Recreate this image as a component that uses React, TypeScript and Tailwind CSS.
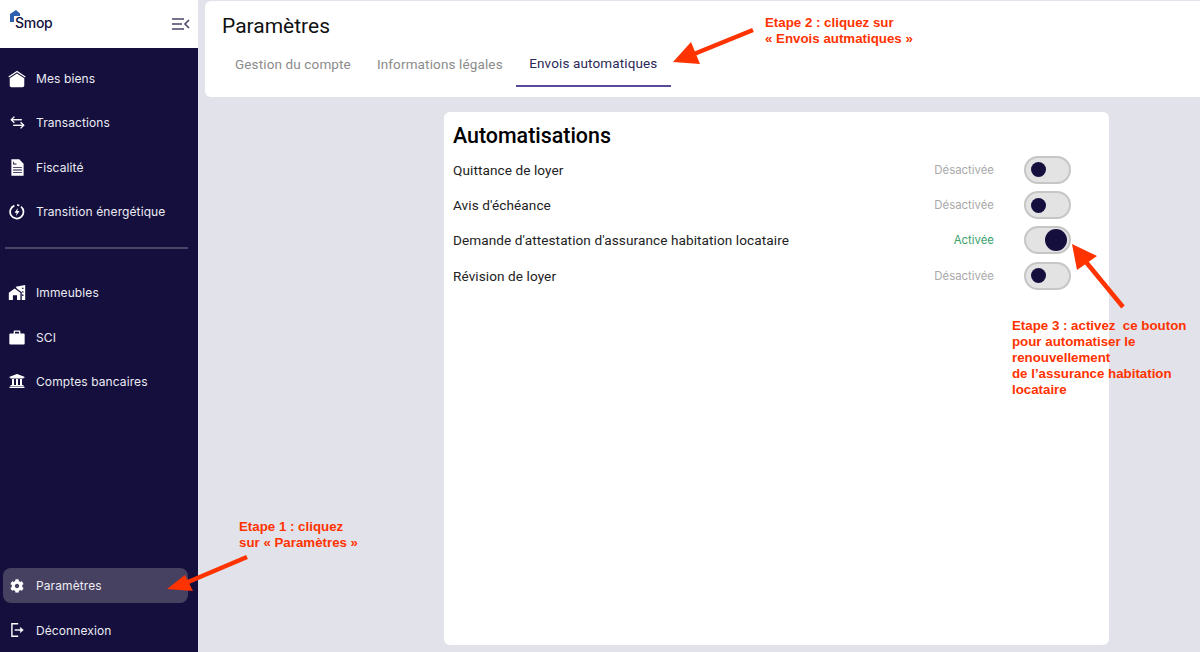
import React from "react";
import { FaCog, FaUniversity } from "react-icons/fa";

const inter = "font-['Inter',sans-serif]";
const roboto = "font-['Roboto',sans-serif]";

const Home = () => (
  <svg width="18" height="18" viewBox="0 0 26 26" fill="white"><path d="M13 1 L0.5 9.5 L1.5 11 L13 3.2 L24.5 11 L25.5 9.5 Z" /><path d="M13 5 L2.5 12 V22.5 Q2.5 25 5 25 H21 Q23.5 25 23.5 22.5 V12 Z" /></svg>
);
const Swap = () => (
  <svg width="15" height="13" viewBox="0 0 24 21" fill="none" stroke="white" strokeWidth="2.2"><path d="M2 6 H19" /><path d="M7 1 L2 6 L7 11" /><path d="M5 15 H22" /><path d="M17 10 L22 15 L17 20" /></svg>
);
const Doc = () => (
  <svg width="13" height="17" viewBox="0 0 19 25" fill="white"><path fillRule="evenodd" d="M0.5 0.5 H12 L18.5 7 V24.5 H0.5 Z M3 4 v4 h5 v-1.2 H4.2 V4 Z M3 12 v1.3 h13 V12 Z M3 15.5 v1.3 h13 v-1.3 Z M3 19 v1.3 h13 V19 Z" /></svg>
);
const Energy = () => (
  <svg width="16" height="16" viewBox="0 0 24 24" fill="none" stroke="white" strokeWidth="2.6"><path d="M8 2.5 A 10 10 0 1 0 18 4" /><path d="M12 1.5 A 10 10 0 0 1 15.5 2.2" /><path d="M13.2 6 L8.3 13 H11.5 L10.6 18 L15.8 10.6 H12.5 Z" fill="white" stroke="none" /></svg>
);
const Buildings = () => (
  <svg width="18" height="15" viewBox="0 0 26 22" fill="white"><path d="M11 2.5 L25 0 V22 H20 V10.5 L13 5.5 Z" /><path fillRule="evenodd" d="M9.5 5 L18 11.5 V22 H13 V15 H7 V22 H1 V11.5 L0 12 Z" /><path d="M20.5 4 h2 v2 h-2 Z M20.5 9 h2 v2 h-2 Z M20.5 14 h2 v2 h-2 Z" fill="#140f3d" /></svg>
);
const Case = () => (
  <svg width="16" height="15" viewBox="0 0 24 22" fill="white"><path fillRule="evenodd" d="M8 0.5 H16 Q17 0.5 17 1.5 V5 H22 Q23.5 5 23.5 6.5 V20 Q23.5 21.5 22 21.5 H2 Q0.5 21.5 0.5 20 V6.5 Q0.5 5 2 5 H7 V1.5 Q7 0.5 8 0.5 Z M9 2.5 V5 H15 V2.5 Z" /></svg>
);
const Logout = () => (
  <svg width="13" height="14" viewBox="0 0 18 20" fill="none" stroke="white" strokeWidth="2"><path d="M10 1 H1 V19 H10" /><path d="M5 10 H14" /><path d="M13 6 L17.5 10 L13 14 Z" fill="white" strokeWidth="0.5" /></svg>
);

function NavItem({ icon, label }: { icon: React.ReactNode; label: string }) {
  return (
    <div className="flex h-[36px] items-center">
      <div className="flex w-[36px] shrink-0 items-center justify-center pr-[2px]">{icon}</div>
      <span className={`${inter} pt-[1px] text-[12px] leading-none tracking-[0.1px] text-[#ecebf2]`}>{label}</span>
    </div>
  );
}

function Row({ label, status, on }: { label: string; status: string; on?: boolean }) {
  return (
    <div className="flex h-[35.4px] items-center">
      <span className={`${roboto} flex-1 text-[13.6px] tracking-[0.08px] text-[#222]`}>{label}</span>
      <span className={`${inter} mr-[30px] mt-[1px] text-[11.4px] ${on ? "text-[#3aa36c]" : "text-[#a9a9a9]"}`}>{status}</span>
      <div className={`mr-[38px] flex h-[28px] w-[47px] items-center rounded-full border-2 border-[#c6c6c6] bg-[#e3e3e3] ${on ? "justify-end pr-[2px]" : "pl-[5px]"}`}>
        <div className={`rounded-full bg-[#140f3d] ${on ? "size-[22px]" : "size-[15px]"}`} />
      </div>
    </div>
  );
}

const Arrow = ({ from, to, head }: { from: [number, number]; to: [number, number]; head: string }) => (
  <g>
    <line x1={from[0]} y1={from[1]} x2={to[0]} y2={to[1]} stroke="#ff3300" strokeWidth="4.5" />
    <polygon points={head} fill="#ff3300" />
  </g>
);

const note = "absolute font-['Liberation_Sans',sans-serif] text-[13.3px] font-bold leading-[16px] text-[#ff3300] whitespace-pre";

export default function App() {
  return (
    <div className="relative flex h-[652px] w-[1200px] overflow-hidden bg-[#e2e2ea]">
      <aside className="flex w-[198px] shrink-0 flex-col bg-[#140f3d]">
        <div className="flex h-[48px] items-center justify-between bg-white pl-[10px] pr-[8px]">
          <div className="relative mb-[3px] h-[24px] w-[44px]">
            <svg className="absolute left-0 top-[-1px]" width="12" height="14" viewBox="0 0 12 14"><path d="M6 0 L0 4 V12 H4 V6 H10 V3.5 Z" fill="#2f5fb0" /></svg>
            <span className={`${inter} absolute left-[5px] top-[2px] text-[14px] font-medium leading-[20px] tracking-[-0.3px] text-[#140f3d]`}>Smop</span>
          </div>
          <svg width="18" height="14" viewBox="0 0 18 14" fill="none" stroke="#4a4668" strokeWidth="1.6"><path d="M0 2 H12 M0 7 H10 M0 12 H12" /><path d="M17 3 L13 7 L17 11" /></svg>
        </div>
        <div className="flex flex-col gap-[8.4px] pt-[12.5px]">
          <NavItem icon={<Home />} label="Mes biens" />
          <NavItem icon={<Swap />} label="Transactions" />
          <NavItem icon={<Doc />} label="Fiscalité" />
          <NavItem icon={<Energy />} label="Transition énergétique" />
        </div>
        <div className="mb-[25.5px] ml-[5px] mr-[10px] mt-[17.5px] h-[2px] bg-[#4a4668]" />
        <div className="flex flex-col gap-[8.4px]">
          <NavItem icon={<Buildings />} label="Immeubles" />
          <NavItem icon={<Case />} label="SCI" />
          <NavItem icon={<FaUniversity size={16} color="white" />} label="Comptes bancaires" />
        </div>
        <div className="mt-auto flex flex-col gap-[9px] pb-[4px]">
          <div className="ml-[3px] mr-[10px] flex h-[35px] items-center rounded-[8px] bg-[#474161]">
            <div className="flex w-[33px] shrink-0 items-center justify-center pr-[5px]"><FaCog size={14} color="white" /></div>
            <span className={`${inter} pt-[1px] text-[12px] leading-none tracking-[0.1px] text-[#ecebf2]`}>Paramètres</span>
          </div>
          <NavItem icon={<Logout />} label="Déconnexion" />
        </div>
      </aside>

      <main className="flex min-w-0 flex-1 flex-col">
        <header className="ml-[7px] mt-[1px] h-[96px] rounded-l-[6px] bg-white pl-[17px]">
          <h1 className={`${roboto} pt-[11px] text-[21px] font-normal leading-[28px] text-[#111]`}>Paramètres</h1>
          <div className={`${roboto} mt-[1px] flex text-[13.5px] tracking-[0.13px]`}>
            <div className="flex h-[46px] items-center px-[13px] text-[#8b8b8b]">Gestion du compte</div>
            <div className="flex h-[46px] items-center px-[13px] text-[#8b8b8b]">Informations légales</div>
            <div className="flex h-[46px] items-center border-b-2 border-[#5b4a9b] px-[13.5px] text-[#2c2858]">Envois automatiques</div>
          </div>
        </header>
        <section className="ml-[246px] mt-[15px] flex h-[533px] w-[665px] flex-col rounded-[6px] bg-white pl-[9px]">
          <h2 className={`${roboto} mb-[2px] pt-[10px] text-[21.4px] font-medium leading-[28px] text-black`}>Automatisations</h2>
          <Row label="Quittance de loyer" status="Désactivée" />
          <Row label="Avis d'échéance" status="Désactivée" />
          <Row label="Demande d'attestation d'assurance habitation locataire" status="Activée" on />
          <Row label="Révision de loyer" status="Désactivée" />
        </section>
      </main>

      <svg className="pointer-events-none absolute left-0 top-0" width="1200" height="652">
        <Arrow from={[247, 557]} to={[188, 582]} head="167,589 193,591 185,575" />
        <Arrow from={[753, 30]} to={[694, 54]} head="673,62 700,64 691,42" />
        <Arrow from={[1123, 307]} to={[1086, 262]} head="1072,244 1097,256 1077,270" />
      </svg>
      <div className={note} style={{ left: 239, top: 519 }}>{"Etape 1 : cliquez\nsur « Paramètres »"}</div>
      <div className={note} style={{ left: 765, top: 15 }}>{"Etape 2 : cliquez sur\n« Envois autmatiques »"}</div>
      <div className={note} style={{ left: 1012, top: 318 }}>{"Etape 3 : activez  ce bouton\npour automatiser le\nrenouvellement\nde l’assurance habitation\nlocataire"}</div>
    </div>
  );
}
